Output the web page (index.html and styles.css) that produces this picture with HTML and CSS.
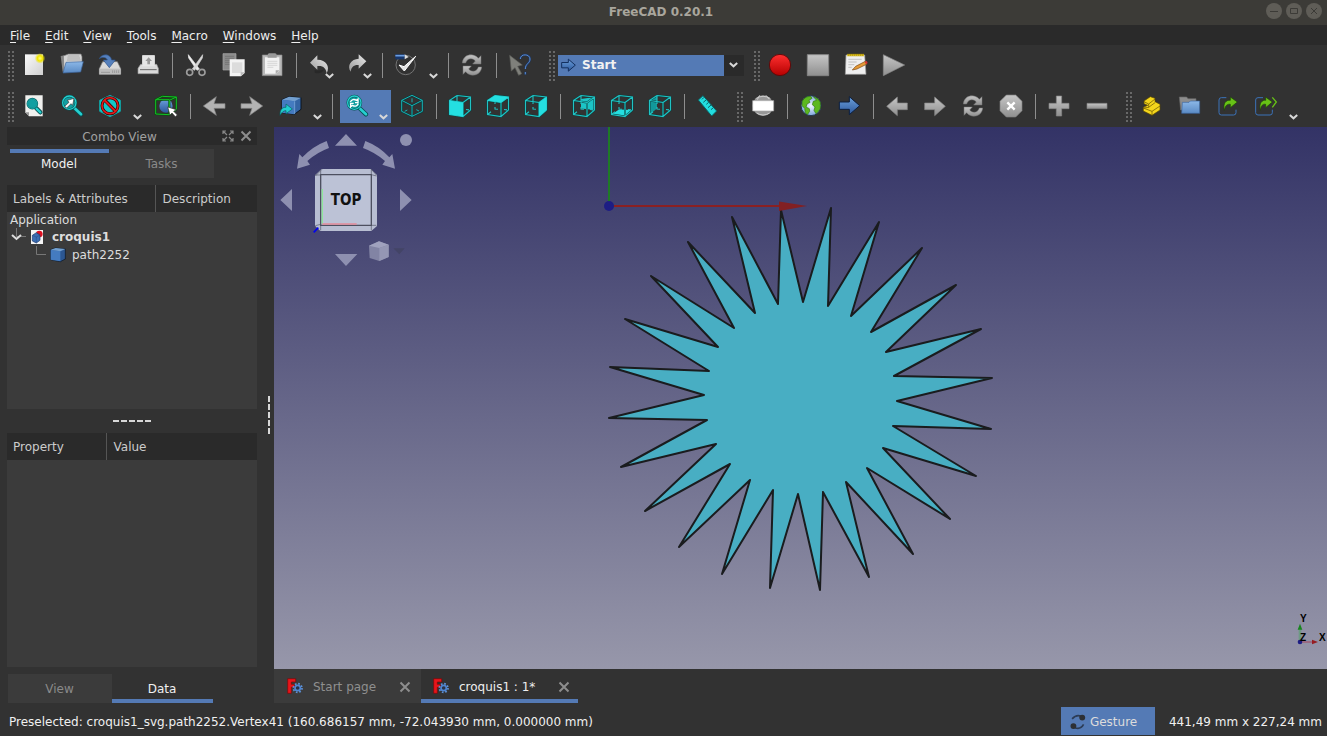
FILE: index.html
```html
<!DOCTYPE html>
<html lang="en">
<head>
<meta charset="utf-8">
<title>FreeCAD 0.20.1</title>
<link rel="stylesheet" href="styles.css">
</head>
<body>
<svg class="defs" aria-hidden="true">
  <defs>
    <linearGradient id="gray" x1="0" y1="0" x2="0" y2="1"><stop offset="0" stop-color="#c6c6c6"/><stop offset="1" stop-color="#8f8f8f"/></linearGradient>
    <linearGradient id="paper" x1="0" y1="0" x2="1" y2="1"><stop offset="0" stop-color="#fafafa"/><stop offset="1" stop-color="#cfcfcf"/></linearGradient>
    <linearGradient id="blue" x1="0" y1="0" x2="0" y2="1"><stop offset="0" stop-color="#6ba0dc"/><stop offset="1" stop-color="#2c579b"/></linearGradient>
    <linearGradient id="folder" x1="0" y1="0" x2="0" y2="1"><stop offset="0" stop-color="#8cb8e8"/><stop offset="1" stop-color="#5a8ac4"/></linearGradient>
    <linearGradient id="red" x1="0" y1="0" x2="0" y2="1"><stop offset="0" stop-color="#ff3030"/><stop offset="1" stop-color="#b40000"/></linearGradient>
    <radialGradient id="glow"><stop offset="0" stop-color="#fffb80"/><stop offset=".5" stop-color="#f2e600"/><stop offset="1" stop-color="#f2e600" stop-opacity="0"/></radialGradient>
    <radialGradient id="ocean"><stop offset="0" stop-color="#f2f7ff"/><stop offset="1" stop-color="#7ea6dc"/></radialGradient>
    <linearGradient id="undofade" x1="1" y1="0" x2="0" y2="1"><stop offset="0" stop-color="#e8e8e8"/><stop offset="1" stop-color="#9a9a9a"/></linearGradient>
  </defs>
  <symbol id="drop" viewBox="0 0 9 6"><path d="M.8 1L4.500 4.300L8.200 1" fill="none" stroke="#d8d8d8" stroke-width="2"/></symbol>
  <symbol id="wire" viewBox="0 0 24 24"><path d="M1.500 6.500L15 8.500V22.500L1.500 20.500ZM22.500 3V16L15 22.500M9 1.500L22.500 3M1.500 6.500L9 1.500M15 8.500L22.500 3" fill="none" stroke="#0b3c3c" stroke-width="2"/><path d="M1.500 6.500L15 8.500V22.500L1.500 20.500ZM9 1.500L22.500 3V16M9 1.500V10M1.500 6.500L9 1.500M15 8.500L22.500 3M15 22.500L22.500 16M1.500 20.500L5 17.700M9 13v2l3 .3M18 15.500l3 .4" fill="none" stroke="#1fc3c4" stroke-width="1.100"/></symbol>
  <symbol id="reload" viewBox="0 0 72 72"><g fill="url(#gray)" stroke="#777" stroke-width="1.500"><path d="M7 30C9 2 43 -1 55 16L63 8V33H38L46 24C37 13 21 16 17 30Z"/><path d="M65 42C63 70 29 73 17 56L9 64V39H34L26 48C35 59 51 56 55 42Z"/></g></symbol>
  <symbol id="fatarrow" viewBox="0 0 72 72"><path d="M5 27H35V9L67 37L35 65V47H5Z"/></symbol>
  <symbol id="lens" viewBox="0 0 72 72"><path d="M43 42L63 61" stroke="#074f50" stroke-width="13" stroke-linecap="round"/><path d="M43 42L63 61" stroke="#25cfd0" stroke-width="8" stroke-linecap="round"/><circle cx="28" cy="26" r="20" fill="#129fa2" stroke="#074f50" stroke-width="7"/><circle cx="28" cy="26" r="20" fill="none" stroke="#25cfd0" stroke-width="4"/></symbol>
  <symbol id="fclogo" viewBox="0 0 48 48"><path d="M2 2H26V12H13V19H22V28H13V46H2Z" fill="#e8151b" stroke="#7a0708" stroke-width="2"/><circle cx="32" cy="30" r="13" fill="none" stroke="#5f94dc" stroke-width="5" stroke-dasharray="5 5.200"/><circle cx="32" cy="30" r="8" fill="#2b3243" stroke="#4f86d2" stroke-width="5"/></symbol>
  <symbol id="close" viewBox="0 0 12 12"><path d="M1.500 1.500L10.500 10.500M10.500 1.500L1.500 10.500" stroke="#8d8d8d" stroke-width="2"/></symbol>
</svg>

<div class="app">
  <header class="titlebar">
    <h1 class="title">FreeCAD 0.20.1</h1>
    <div class="winbuttons">
      <button class="winbutton" aria-label="Minimize"><svg viewBox="0 0 16 16"><path d="M4 8.500H12"/></svg></button>
      <button class="winbutton" aria-label="Maximize"><svg viewBox="0 0 16 16"><path d="M4.500 5.500H11.500V10.500H4.500Z"/></svg></button>
      <button class="winbutton" aria-label="Close"><svg viewBox="0 0 16 16"><path d="M5 5L11 11M11 5L5 11"/></svg></button>
    </div>
  </header>

  <nav class="menubar">
    <button class="menu"><u>F</u>ile</button>
    <button class="menu"><u>E</u>dit</button>
    <button class="menu"><u>V</u>iew</button>
    <button class="menu"><u>T</u>ools</button>
    <button class="menu"><u>M</u>acro</button>
    <button class="menu"><u>W</u>indows</button>
    <button class="menu"><u>H</u>elp</button>
  </nav>

  <div class="toolbar">
    <span class="grip grip-first"></span>
    <button class="tool" aria-label="New"><svg class="icon" viewBox="66 159 72 72"><path d="M75 163H129V225H75Z" fill="url(#paper)"/><circle cx="120" cy="175" r="16" fill="url(#glow)"/></svg></button>
    <button class="tool" aria-label="Open"><svg class="icon" viewBox="180 159 72 72"><path d="M182 168L194 166L200 215H188Z" fill="#858585"/><path d="M190 168L205 162H243L246 170V190L192 216Z" fill="#d4d4d4" stroke="#777" stroke-width="2"/><path d="M203 168H238M202 174H240M201 180H242" stroke="#999" stroke-width="2"/><path d="M198 187L250 185L242 216L189 219Z" fill="url(#folder)" stroke="#3b639c" stroke-width="2"/></svg></button>
    <button class="tool" aria-label="Save"><svg class="icon" viewBox="294 159 72 72"><path d="M308 185H352L362 206V223H298V206Z" fill="#d9d9d9" stroke="#888" stroke-width="2"/><path d="M298 206H362V223H298Z" fill="#bdbdbd"/><path d="M303 217H330M338 211v8M344 211v8M350 211v8M356 211v8" stroke="#888" stroke-width="2"/><path d="M298 176C304 162 330 158 335 180H346L328 203L310 180H322C318 170 305 171 298 176Z" fill="#5580bd" stroke="#2d5288" stroke-width="2"/></svg></button>
    <button class="tool" aria-label="Print"><svg class="icon" viewBox="408 159 72 72"><path d="M427 166H464V205H427Z" fill="#efefef"/><path d="M422 193L470 193L475 205V221H414V205Z" fill="#dadada" stroke="#999" stroke-width="2"/><path d="M427 166H464V199H427Z" fill="#e5e5e5"/><path d="M446 172L456 183H450V193H442V183H436Z" fill="#999"/><path d="M420 209H470" stroke="#666" stroke-width="3"/></svg></button>
    <span class="sep"></span>
    <button class="tool" aria-label="Cut"><svg class="icon" viewBox="552 159 72 72"><path d="M565 164L598 207L591 211L566 174Z" fill="#eee" stroke="#eee" stroke-width="2"/><path d="M608 164L577 207L584 211L607 174Z" fill="#d8d8d8" stroke="#d8d8d8" stroke-width="2"/><circle cx="569" cy="217" r="9" fill="none" stroke="#9c9c9c" stroke-width="5"/><circle cx="606" cy="217" r="9" fill="none" stroke="#9c9c9c" stroke-width="5"/></svg></button>
    <button class="tool" aria-label="Copy"><svg class="icon" viewBox="666 159 72 72"><path d="M669 161H708V210H669Z" fill="#8b8b8b" stroke="#aaa" stroke-width="2"/><path d="M675 169H702M675 175H702M675 181H702M675 187H702M675 193H702" stroke="#6b6b6b" stroke-width="2"/><path d="M689 178H734V219L723 229H689Z" fill="#f3f3f3"/><path d="M696 187H727V219H696Z" fill="#dcdcdc"/><path d="M722 229V217H734Z" fill="#bbb"/></svg></button>
    <button class="tool" aria-label="Paste"><svg class="icon" viewBox="780 159 72 72"><path d="M787 165H846V227H787Z" fill="#b9b9b9" stroke="#8a8a8a" stroke-width="2"/><path d="M795 172H838V212L828 221H795Z" fill="#f2f2f2"/><path d="M803 165Q803 160 808 160H825Q830 160 830 165V173H803Z" fill="#999"/><path d="M802 184H832M802 190H832M802 196H832M802 202H820" stroke="#c9c9c9" stroke-width="2"/><path d="M827 222V211H838Z" fill="#aaa"/></svg></button>
    <span class="sep"></span>
    <button class="tool" aria-label="Undo"><svg class="icon" viewBox="926 159 72 72"><path d="M932 188L954 166V179C978 178 994 198 982 220C980 204 971 196 954 198V209Z" fill="url(#undofade)"/><path d="M946 218Q966 224 975 208Q960 214 946 210Z" fill="#222" opacity=".6"/></svg><svg class="drop"><use href="#drop"/></svg></button>
    <button class="tool" aria-label="Redo"><svg class="icon" viewBox="51 24 72 72"><path d="M112 49L89 28V41C66 42 53 62 65 80C67 66 74 59 89 60V71Z" fill="url(#undofade)"/></svg><svg class="drop"><use href="#drop"/></svg></button>
    <span class="sep"></span>
    <button class="tool tool-wide" aria-label="Edit mode"><svg class="icon" viewBox="192 24 72 72"><circle cx="227" cy="60" r="29" fill="none" stroke="#747474" stroke-width="3"/><path d="M207 60L223 78L257 34L222 65Z" fill="#e3e3e3" stroke="#fff" stroke-width="3"/><path d="M196 28H224V43H196Z" fill="#17366b"/><path d="M196 32H224" stroke="#6b9ce0" stroke-width="5"/><path d="M224 28L236 36L224 43Z" fill="#ddd"/></svg><svg class="drop"><use href="#drop"/></svg></button>
    <span class="sep"></span>
    <button class="tool" aria-label="Refresh"><svg class="icon" viewBox="0 0 72 72"><use href="#reload"/></svg></button>
    <span class="sep"></span>
    <button class="tool" aria-label="What's this?"><svg class="icon" viewBox="534 24 72 72"><path d="M539 31L577 60L563 64L575 86L566 91L555 68L544 78Z" fill="#7f807b" stroke="#5c5d59" stroke-width="2"/><path d="M571 42C571 25 600 26 600 42C600 56 586 55 586 72M586 80V89" fill="none" stroke="#20385f" stroke-width="7"/><path d="M571 42C571 25 600 26 600 42C600 56 586 55 586 72M586 81V88" fill="none" stroke="#5b8bd0" stroke-width="3"/></svg></button>
    <span class="grip"></span>
    <div class="workbench">
      <svg class="workbench-icon" viewBox="690 38 48 44"><path d="M695 51H715V41L736 59L715 77V67H695Z" fill="url(#blue)" stroke="#14305f" stroke-width="3"/></svg>
      <select class="workbench-select" aria-label="Workbench"><option>Start</option></select>
      <svg class="workbench-drop"><use href="#drop"/></svg>
    </div>
    <span class="grip"></span>
    <button class="tool" aria-label="Record macro"><svg class="icon" viewBox="384 24 72 72"><circle cx="420" cy="60" r="32" fill="url(#red)" stroke="#5b0a0a" stroke-width="3"/></svg></button>
    <button class="tool" aria-label="Stop macro"><svg class="icon" viewBox="498 24 72 72"><path d="M502 29H566V92H502Z" fill="url(#gray)" stroke="#858585" stroke-width="3"/></svg></button>
    <button class="tool" aria-label="Macros"><svg class="icon" viewBox="612 24 72 72"><path d="M618 30H674L678 88H616Z" fill="#efefef" stroke="#999" stroke-width="2"/><path d="M622 30H672" stroke="#a48a00" stroke-width="7"/><path d="M622 31H672" stroke="#f5d83c" stroke-width="5" stroke-dasharray="3 3"/><path d="M625 43H665M625 51H650M625 59H643M625 67H635" stroke="#aaa" stroke-width="2"/><path d="M637 75L647 64L676 49L681 57L651 72Z" fill="#e59a37" stroke="#784713" stroke-width="2"/><path d="M674 50L680 48L683 54L678 58Z" fill="#d63131"/></svg></button>
    <button class="tool" aria-label="Execute macro"><svg class="icon" viewBox="726 24 72 72"><path d="M730 29L794 60L730 92Z" fill="url(#gray)" stroke="#858585" stroke-width="2"/></svg></button>
  </div>

  <div class="toolbar">
    <span class="grip grip-first"></span>
    <button class="tool" aria-label="Fit all"><svg class="icon" viewBox="66 282 72 72"><path d="M76 286H128V349H87L76 337Z" fill="#f0f0ee"/><path d="M76 337H87V349Z" fill="#999"/><path d="M109 325L121 337" stroke="#074f50" stroke-width="13" stroke-linecap="round"/><path d="M109 325L121 337" stroke="#25cfd0" stroke-width="7" stroke-linecap="round"/><circle cx="97" cy="311" r="15" fill="#129fa2" stroke="#0a6a6b" stroke-width="5"/><circle cx="97" cy="311" r="14" fill="none" stroke="#25c9ca" stroke-width="2"/></svg></button>
    <button class="tool" aria-label="Fit selection"><svg class="icon" viewBox="0 0 72 72"><use href="#lens"/><path d="M14 37L27 25L22 19L42 13L38 34L33 29L20 42Z" fill="#fff" stroke="#333" stroke-width="2"/></svg></button>
    <button class="tool tool-wide" aria-label="Draw style"><svg class="icon" viewBox="294 282 72 72"><path d="M330 286L361 301V334L330 350L299 334V301Z" fill="#12c6c8" stroke="#0fa5a7" stroke-width="3"/><circle cx="330" cy="317" r="24" fill="none" stroke="#3b0000" stroke-width="9"/><path d="M314 300L347 334" stroke="#3b0000" stroke-width="10"/><circle cx="330" cy="317" r="24" fill="none" stroke="#e11b1b" stroke-width="5"/><path d="M313 300L347 334" stroke="#e11b1b" stroke-width="6"/></svg><svg class="drop"><use href="#drop"/></svg></button>
    <button class="tool" aria-label="Box selection"><svg class="icon" viewBox="462 282 72 72"><circle cx="498" cy="318" r="20" fill="url(#blue)"/><path d="M467 299H508V344L467 342ZM467 299L487 289L529 291L508 301M529 291V328L508 344" fill="none" stroke="#064d0b" stroke-width="6"/><path d="M467 299H508V344L467 342ZM467 299L487 289L529 291L508 301M529 291V328L508 344" fill="none" stroke="#14c326" stroke-width="3"/><path d="M503 321L529 329L521 334L532 345L526 350L516 339L510 345Z" fill="#fff" stroke="#333" stroke-width="2"/></svg></button>
    <span class="sep"></span>
    <button class="tool" aria-label="Back"><svg class="icon" viewBox="606 282 72 72"><path d="M610 318L649 290L642 311H675V325H642L649 346Z" fill="#b3b3b3" stroke="#858585" stroke-width="2"/></svg></button>
    <button class="tool" aria-label="Forward"><svg class="icon" viewBox="720 282 72 72"><path d="M788 318L749 290L756 311H723V325H756L749 346Z" fill="#b3b3b3" stroke="#858585" stroke-width="2"/></svg></button>
    <button class="tool tool-wide" aria-label="Linked object"><svg class="icon" viewBox="834 282 72 72"><path d="M846 299L867 290L903 293V328L883 343L846 338Z" fill="#3465a4" stroke="#0b1521" stroke-width="3"/><path d="M846 299L867 290L903 293L884 304Z" fill="#729fcf"/><path d="M846 299L884 304L883 343L846 338Z" fill="#447bc0"/><path d="M884 304V342" stroke="#8ab4e4" stroke-width="2"/><path d="M840 346C839 326 850 321 858 322V312L877 327L858 341V332C850 332 845 337 840 346Z" fill="#20cdce" stroke="#075f60" stroke-width="2"/></svg><svg class="drop"><use href="#drop"/></svg></button>
    <span class="sep sep-tight"></span>
    <button class="tool tool-wide tool-active" aria-label="Sync view" aria-pressed="true"><svg class="icon" viewBox="0 0 72 72"><use href="#lens"/><g fill="none" stroke="#fff" stroke-width="4"><path d="M16 24Q22 12 35 19L39 15V26H30M40 29Q34 41 22 34L17 39V28H26"/></g></svg><svg class="drop"><use href="#drop"/></svg></button>
    <button class="tool" aria-label="Isometric"><svg class="icon" viewBox="210 147 72 72"><g fill="none"><path d="M246 151L277 166V199L246 214L215 199V166ZM215 166L246 182L277 166M246 182V214" stroke="#0a3c3d" stroke-width="6"/><path d="M246 151L277 166V199L246 214L215 199V166ZM215 166L246 182L277 166M246 182V214M246 160V172M232 195L224 199M259 194L267 198" stroke="#1ab0b2" stroke-width="3"/></g></svg></button>
    <span class="sep"></span>
    <button class="tool" aria-label="Front"><svg class="icon" viewBox="0 0 24 24"><use href="#wire"/><path d="M1.500 6.500L15 8.500V22.500L1.500 20.500Z" fill="#24dfe1"/></svg></button>
    <button class="tool" aria-label="Top"><svg class="icon" viewBox="0 0 24 24"><use href="#wire"/><path d="M1.500 6.500L9 1.500L22.500 3L15 8.500Z" fill="#24dfe1"/></svg></button>
    <button class="tool" aria-label="Right"><svg class="icon" viewBox="0 0 24 24"><use href="#wire"/><path d="M15 8.500L22.500 3V16L15 22.500Z" fill="#24dfe1"/></svg></button>
    <span class="sep"></span>
    <button class="tool" aria-label="Rear"><svg class="icon" viewBox="0 0 24 24"><path d="M9 5L22.500 3V16L9 14.500Z" fill="#1cc5c7"/><use href="#wire"/></svg></button>
    <button class="tool" aria-label="Bottom"><svg class="icon" viewBox="0 0 24 24"><path d="M1.500 20.500L9 15.500L22.500 16L15 22.500Z" fill="#24dfe1"/><use href="#wire"/></svg></button>
    <button class="tool" aria-label="Left"><svg class="icon" viewBox="0 0 24 24"><path d="M1.500 6.500L9 1.500V14.500L1.500 20.500Z" fill="#12999b"/><use href="#wire"/></svg></button>
    <span class="sep"></span>
    <button class="tool" aria-label="Measure"><svg class="icon" viewBox="166 147 72 72"><path d="M173 165L187 152L228 198L213 213Z" fill="#22dde0" stroke="#0a6465" stroke-width="3"/><path d="M190 157L184 163M197 164L188 172M204 172L197 178M211 180L202 188M218 188L211 194" stroke="#0a6465" stroke-width="3"/></svg></button>
    <span class="grip"></span>
    <button class="tool" aria-label="Set URL"><svg class="icon" viewBox="333 147 72 72"><circle cx="369" cy="182" r="31" fill="#989898"/><path d="M349 160Q369 148 390 160M350 204Q369 216 389 204M359 151L352 164M378 151L387 163" fill="none" stroke="#ccc" stroke-width="3"/><path d="M338 167H401V198H338Z" fill="#fff" stroke="#aaa" stroke-width="2"/></svg></button>
    <span class="sep"></span>
    <button class="tool" aria-label="Open website"><svg class="icon" viewBox="477 147 72 72"><circle cx="513" cy="182" r="30" fill="url(#ocean)" stroke="#24364f" stroke-width="3"/><path d="M487 168Q495 154 512 154L516 160L507 166L510 172L501 177L498 186L508 191L509 199L502 209L496 203L494 190L486 182ZM520 155Q535 158 541 172V190L535 199L528 206L522 196L525 186L517 179L520 169L530 166Z" fill="#5cb81f" stroke="#33770c" stroke-width="2"/></svg></button>
    <button class="tool" aria-label="Start page"><svg class="icon" viewBox="591 147 72 72"><path d="M598 171H628V155L659 182L628 209V193H598Z" fill="url(#blue)" stroke="#0c1e3d" stroke-width="3"/></svg></button>
    <span class="sep"></span>
    <button class="tool" aria-label="Previous page"><svg class="icon flip" viewBox="0 0 72 72" fill="url(#gray)" stroke="#858585" stroke-width="2"><use href="#fatarrow"/></svg></button>
    <button class="tool" aria-label="Next page"><svg class="icon" viewBox="0 0 72 72" fill="url(#gray)" stroke="#858585" stroke-width="2"><use href="#fatarrow"/></svg></button>
    <button class="tool" aria-label="Reload"><svg class="icon" viewBox="0 0 72 72"><use href="#reload"/></svg></button>
    <button class="tool" aria-label="Stop loading"><svg class="icon" viewBox="117 282 72 72"><path d="M139 285H167L186 304V332L167 351H139L120 332V304Z" fill="url(#gray)" stroke="#808080" stroke-width="2"/><path d="M142 307L164 329M164 307L142 329" stroke="#fff" stroke-width="7"/></svg></button>
    <span class="sep"></span>
    <button class="tool" aria-label="Zoom in"><svg class="icon" viewBox="261 282 72 72"><path d="M289 288H305V310H327V326H305V348H289V326H267V310H289Z" fill="url(#gray)" stroke="#858585" stroke-width="2"/></svg></button>
    <button class="tool" aria-label="Zoom out"><svg class="icon" viewBox="375 282 72 72"><path d="M381 310H441V326H381Z" fill="url(#gray)" stroke="#858585" stroke-width="2"/></svg></button>
    <span class="grip"></span>
    <button class="tool" aria-label="Part"><svg class="icon" viewBox="540 282 72 72"><g fill="#f3d51c" stroke="#5d4c00" stroke-width="2"><path d="M552 311V303L571 290L585 295V305L600 313V330L576 346L550 333V322L563 316Z"/><path d="M552 305L566 312L585 297M566 312V322L550 324L576 334L600 318M576 334V346M566 322L585 308" fill="none"/></g></svg></button>
    <button class="tool" aria-label="Group"><svg class="icon" viewBox="654 282 72 72"><path d="M658 291H680L684 296H708V330H662Z" fill="#8d8d8d" stroke="#666" stroke-width="2"/><path d="M667 307H687L691 303H719V340H665Z" fill="url(#folder)" stroke="#3b639c" stroke-width="2"/></svg></button>
    <button class="tool" aria-label="Make link"><svg class="icon" viewBox="768 282 72 72"><path d="M799 293H784Q777 293 777 300V338Q777 345 784 345H821Q828 345 828 338V329" fill="none" stroke="#3b72b8" stroke-width="3"/><path d="M793 331C788 309 799 299 811 301V291L832 306L811 323V313C802 311 795 317 793 331Z" fill="#68c216" stroke="#1d4207" stroke-width="2"/></svg></button>
    <button class="tool tool-wide" aria-label="Link actions"><svg class="icon" viewBox="882 282 72 72"><path d="M909 293H894Q887 293 887 300V338Q887 345 894 345H930Q937 345 937 338V329" fill="none" stroke="#3b72b8" stroke-width="3"/><path d="M901 331C896 309 907 299 917 301V291L937 306L917 323V313C908 311 903 317 901 331Z" fill="#68c216" stroke="#1d4207" stroke-width="2"/><path d="M937 292L949 306L937 322" fill="none" stroke="#68c216" stroke-width="4"/></svg><svg class="drop"><use href="#drop"/></svg></button>
  </div>

  <main class="workspace">
    <aside class="dock">
      <div class="dock-title">
        <h2 class="dock-name">Combo View</h2>
        <button class="dock-button" aria-label="Float"><svg class="dock-icon" viewBox="0 0 12 12"><path d="M1 4V1H4M1 1L5 5M8 1H11V4M11 1L7 5M1 8V11H4M1 11L5 7M11 8V11H8M11 11L7 7" fill="none" stroke="#888" stroke-width="1.200"/></svg></button>
        <button class="dock-button" aria-label="Close panel"><svg class="dock-icon"><use href="#close"/></svg></button>
      </div>
      <div class="tabs tabs-top" role="tablist">
        <button class="tab tab-current" role="tab" aria-selected="true">Model</button>
        <button class="tab" role="tab" aria-selected="false">Tasks</button>
      </div>
      <div class="pane pane-tree">
        <table class="head">
          <thead><tr><th class="col-label">Labels &amp; Attributes</th><th>Description</th></tr></thead>
        </table>
        <ul class="tree">
          <li>Application
            <ul class="branch">
              <li class="node node-doc"><svg class="twig" viewBox="0 0 16 18"><path d="M6.500 0V8.500H17" fill="none" stroke="#777"/><path d="M2 7L6.500 11L11 7" fill="none" stroke="#ddd" stroke-width="2"/></svg><svg class="node-icon" viewBox="93 308 48 48"><path d="M96 311H132V353H96Z" fill="#f5f5f5"/><circle cx="121" cy="323" r="10" fill="#e01020"/><path d="M100 327L112 319L123 326V342L112 350L100 344Z" fill="#3b6eb3" stroke="#1d3a6b" stroke-width="2"/><path d="M112 332V350M100 327L112 332L123 326" stroke="#1d3a6b" stroke-width="1" fill="none"/></svg><b>croquis1</b></li>
              <li class="node node-part"><svg class="twig" viewBox="0 0 16 18"><path d="M6.500 0V8.500H16" fill="none" stroke="#777"/></svg><svg class="node-icon" viewBox="150 364 48 48"><path d="M152 372L167 367L196 370V400L181 408L152 402Z" fill="#2c5792" stroke="#0b1521" stroke-width="2"/><path d="M152 372L181 377V407L152 402Z" fill="#447bc0"/><path d="M152 372L167 367L196 370L181 377Z" fill="#729fcf"/></svg>path2252</li>
            </ul>
          </li>
        </ul>
      </div>
      <div class="split-row"><span class="split-dashes"></span></div>
      <div class="pane pane-props">
        <table class="head">
          <thead><tr><th class="col-prop">Property</th><th>Value</th></tr></thead>
        </table>
      </div>
      <div class="tabs tabs-bottom" role="tablist">
        <button class="tab" role="tab" aria-selected="false">View</button>
        <button class="tab tab-current" role="tab" aria-selected="true">Data</button>
      </div>
    </aside>
    <div class="split-col"><span class="split-dashes-v"></span></div>

    <section class="editor">
      <div class="viewport">
        <svg class="scene" aria-label="path2252">
          <g transform="translate(-274 -127)">
            <path d="M609 127V206" stroke="#1f7a26" stroke-width="2"/>
            <path d="M831 208L828 306L879 222L851 316L922 248L871 332L956 285L886 352L981 329L894 376L992 378L897 401L991 429L893 426L976 476L883 448L950 519L867 468L913 554L846 482L869 577L823 492L820 590L798 494L770 588L773 490L722 574L750 480L679 547L730 464L645 511L716 444L621 467L707 420L609 418L704 395L610 367L709 371L625 319L718 347L651 276L734 328L688 242L755 313L732 217L778 304L781 210L803 302Z" fill="#48aec3" stroke="#1a1c1e" stroke-width="2" stroke-linejoin="round"/>
            <path d="M609 206H779" stroke="#8a2022" stroke-width="2"/><path d="M779 201.500L807 206L779 211Z" fill="#822023"/>
            <circle cx="609" cy="206" r="5" fill="#1d1d84"/>
          </g>
        </svg>
        <svg class="navcube" viewBox="0 0 160 150" aria-label="Navigation cube">
          <g transform="translate(-4 -2) scale(.333333)">
            <g fill="#8e90b0">
              <path d="M195 62L228 27L261 62ZM195 387H262L228 423ZM66 192V258L31 225ZM390 192V258L425 225Z"/>
              <circle cx="408" cy="45" r="18"/>
              <path d="M170 48L177 69Q141 82 112 108L120 119L81 131L88 87L97 97Q128 64 170 48ZM286 48L279 69Q315 82 345 108L337 119L375 131L367 87L358 97Q328 64 286 48Z"/>
            </g>
            <path d="M155 132H302L321 150V303L304 318H151L135 302V151Z" fill="#b8bed2"/>
            <path d="M152 149H304V301H152Z" fill="#bcc2d6" stroke="#4d5060" stroke-width="4"/>
            <path d="M136 150H152M136 302L152 298M304 149L320 153M304 149V133M156 133L136 153M304 133L320 151M152 149V136M304 301V316M304 301H319M152 301V316" stroke="#555868" stroke-width="2" fill="none"/>
            <path d="M157 192V297" stroke="#8ee69b" stroke-width="4"/><path d="M157 297H260" stroke="#e58a99" stroke-width="4"/>
            <path d="M145 308L131 322" stroke="#0000f0" stroke-width="5"/>
            <path d="M297 362L327 349L356 359V396L328 408L299 399Z" fill="#8284a4"/><path d="M297 362L327 349L356 359L328 369Z" fill="#a0a2be"/><path d="M328 369L356 359V396L328 408Z" fill="#9597b4"/>
            <path d="M370 370H404L388 388Z" fill="#434466"/>
          </g>
          <text class="navcube-face" x="72" y="78">TOP</text>
        </svg>
        <svg class="axes" viewBox="0 0 40 60" aria-label="Axis cross">
          <g transform="translate(-247 -9) scale(.333333)">
            <path d="M780 126V88" stroke="#6d9a83" stroke-width="8"/><path d="M780 71L787 89H773Z" fill="#17851d"/>
            <path d="M780 126H818" stroke="#9a6b83" stroke-width="6"/><path d="M834 126L816 119V133Z" fill="#951d22"/>
            <circle cx="780" cy="126" r="7" fill="#1d1d84"/>
          </g>
          <text class="axes-label" x="13" y="13">Y</text>
          <text class="axes-label" x="13" y="32">Z</text>
          <text class="axes-label" x="32" y="32">X</text>
        </svg>
      </div>
      <div class="doctabs" role="tablist">
        <div class="doctab"><svg class="doc-icon"><use href="#fclogo"/></svg><button class="doc-name" role="tab" aria-selected="false">Start page</button><button class="doc-close" aria-label="Close Start page"><svg class="close"><use href="#close"/></svg></button></div>
        <div class="doctab doctab-current"><svg class="doc-icon"><use href="#fclogo"/></svg><button class="doc-name" role="tab" aria-selected="true">croquis1 : 1*</button><button class="doc-close" aria-label="Close croquis1"><svg class="close"><use href="#close"/></svg></button></div>
      </div>
    </section>
  </main>

  <footer class="status">
    <span class="message">Preselected: croquis1_svg.path2252.Vertex41 (160.686157 mm, -72.043930 mm, 0.000000 mm)</span>
    <button class="gesture"><svg class="gesture-icon" viewBox="90 336 48 52"><g fill="none" stroke="#2c3c56" stroke-width="5"><path d="M96 354Q108 340 124 346M131 371Q122 388 104 381"/></g><circle cx="127" cy="350" r="9" fill="#2d3035"/><circle cx="100" cy="376" r="9" fill="#2d3035"/></svg>Gesture</button>
    <span class="dimensions">441,49 mm x 227,24 mm</span>
  </footer>
</div>
</body>
</html>
```
FILE: styles.css
```css
* { box-sizing: border-box; }
body {
  margin: 0;
  background: #323232;
  color: #eee;
  font: 12px/18px "DejaVu Sans", sans-serif;
}
button {
  margin: 0;
  padding: 0;
  border: 0;
  background: none;
  color: inherit;
  font: inherit;
}
svg { display: block; }
.defs { position: absolute; width: 0; height: 0; }
.app { display: flex; flex-direction: column; height: 100vh; overflow: hidden; }

.titlebar {
  display: grid;
  grid-template-columns: 1fr auto 1fr;
  align-items: center;
  flex: none;
  height: 25px;
  padding-right: 5px;
  background: #3c3b37;
}
.title { grid-column: 2; margin: 0; padding-bottom: 2px; color: #a9a69d; font-size: 12px; font-weight: bold; }
.winbuttons { display: flex; justify-content: flex-end; gap: 4px; padding-bottom: 3px; }
.winbutton { width: 16px; height: 16px; border-radius: 50%; background: #5f5d57; }
.winbutton svg { fill: none; stroke: #3c3b37; stroke-width: 1; }

.menubar { display: flex; flex: none; gap: 1px; height: 20px; padding-left: 3px; background: #2a2a2a; }
.menu { padding: 2px 7px 0; }
.menu u { text-underline-offset: 2px; }

.toolbar { display: flex; flex: none; align-items: center; height: 41px; }
.grip { flex: none; width: 17px; height: 30px; padding-left: 10px; }
.grip-first { width: 15px; padding-left: 8px; }
.grip::before {
  content: "";
  display: block;
  width: 6px;
  height: 30px;
  background: conic-gradient(from 270deg at 2px 2px, #686868 90deg, transparent 0) 0 0 / 4px 4px;
}
.tool { position: relative; flex: none; width: 38px; height: 41px; padding: 0 7px 1px; }
.tool-wide { width: 56px; }
.tool-active { width: 51px; height: 33px; margin: 0 2px 0 0; padding: 0 5px 1px; background: #547ab5; }
.icon { width: 24px; height: 24px; overflow: visible; }
.flip { transform: scaleX(-1); }
.drop { position: absolute; right: 5px; bottom: 7px; width: 9px; height: 6px; }
.tool-active .drop { right: 3px; bottom: 3px; }
.sep { flex: none; width: 10px; height: 25px; padding-left: 5px; }
.sep::before { content: ""; display: block; width: 1px; height: 25px; background: #8e8e8e; }
.sep-tight { width: 13px; }
.workbench { position: relative; flex: none; width: 186px; margin-left: 2px; }
.workbench-select {
  display: block;
  width: 100%;
  height: 21px;
  padding: 0 24px;
  border: 0;
  appearance: none;
  background: linear-gradient(to left, #2a2a2a 20px, #547ab5 20px);
  color: #f2f2f2;
  font: bold 12px/21px "DejaVu Sans", sans-serif;
}
.workbench-icon { position: absolute; left: 2px; top: 3px; width: 16px; height: 15px; }
.workbench-drop { position: absolute; right: 6px; top: 7px; width: 9px; height: 6px; }

.workspace { display: flex; flex: 1; min-height: 0; }
.dock { display: flex; flex-direction: column; flex: none; width: 257px; padding-left: 7px; }
.dock-title {
  display: flex;
  align-items: center;
  gap: 6px;
  height: 18px;
  padding-right: 5px;
  background: #2a2a2a;
}
.dock-name { flex: 1; margin: 0; padding: 1px 0 0 16px; color: #a0a0a0; font-size: 12px; font-weight: normal; text-align: center; }
.dock-icon { width: 12px; height: 12px; }
.tabs { display: flex; flex: none; height: 29px; }
.tabs-top { margin: 4px 0 7px; padding-left: 3px; gap: 1px; }
.tabs-bottom { margin-top: 7px; padding-left: 1px; }
.tab { width: 104px; padding-right: 1px; background: #3b3b3b; color: #8a8a8a; }
.tab-current { width: 99px; background: none; color: #f0f0f0; }
.tabs-top .tab-current { border-top: 4px solid #547ab5; padding-bottom: 4px; }
.tabs-bottom .tab-current { width: 101px; border-bottom: 4px solid #547ab5; padding-top: 4px; }
.pane { background: #3b3b3b; }
.pane-tree { flex: 224 1 0; }
.pane-props { flex: 234 1 0; }
.head { width: 100%; border-collapse: collapse; table-layout: fixed; }
.head th {
  height: 27px;
  padding: 0 6px;
  background: #2a2a2a;
  color: #ccc;
  font-weight: normal;
  text-align: left;
}
.head th + th { padding-left: 7px; border-left: 1px solid #555; }
.col-label { width: 148px; }
.col-prop { width: 99px; }
.tree, .branch { margin: 0; padding: 0; color: #ddd; list-style: none; line-height: 16px; }
.tree { padding-left: 3px; }
.node { display: flex; align-items: center; height: 18px; }
.node-part { padding-left: 20px; }
.twig { width: 16px; height: 18px; }
.node-icon { width: 16px; height: 16px; margin: 0 6px 0 4px; }
.split-row { display: flex; flex: none; justify-content: center; align-items: center; height: 24px; }
.split-dashes { width: 38px; height: 2px; background: repeating-linear-gradient(to right, #d8d8d8 0 6px, transparent 6px 8px); }
.split-col { display: flex; flex: none; justify-content: flex-end; align-items: center; width: 17px; padding: 0 4px 0 0; }
.split-dashes-v { width: 2px; height: 38px; background: repeating-linear-gradient(to bottom, #d8d8d8 0 6px, transparent 6px 8px); }

.editor { display: flex; flex-direction: column; flex: 1; min-width: 0; }
.viewport { position: relative; flex: 1; min-height: 0; background: linear-gradient(#333366, #9797aa); }
.scene { width: 100%; height: 100%; }
.navcube { position: absolute; left: 0; top: 0; width: 160px; height: 150px; }
.navcube-face { fill: #111; font: bold 15px "Liberation Sans Narrow", "DejaVu Sans Condensed", sans-serif; text-anchor: middle; }
.axes { position: absolute; right: 0; bottom: 0; width: 40px; height: 60px; }
.axes-label { fill: #000; font: bold 10px "Liberation Sans", sans-serif; }
.doctabs { display: flex; flex: none; height: 34px; }
.doctab { display: flex; align-items: center; width: 147px; padding: 1px 10px 0 13px; background: #3b3b3b; color: #8f8f8f; }
.doctab-current { width: 157px; padding: 5px 8px 0 12px; border-bottom: 4px solid #547ab5; background: none; color: #eee; }
.doc-icon { width: 16px; height: 16px; margin: 0 10px 2px 0; }
.doc-name { flex: 1; padding-top: 1px; text-align: left; white-space: nowrap; }
.close { width: 12px; height: 12px; }

.status { display: flex; flex: none; align-items: center; height: 33px; padding: 4px 5px 1px 9px; color: #f0f0f0; }
.message, .dimensions { padding-top: 2px; }
.message { flex: 1; }
.gesture { display: flex; align-items: center; gap: 4px; width: 94px; height: 28px; margin-right: 14px; padding: 1px 0 0 9px; background: #547ab5; color: #dcdcdc; }
.gesture-icon { width: 16px; height: 17px; }
```
